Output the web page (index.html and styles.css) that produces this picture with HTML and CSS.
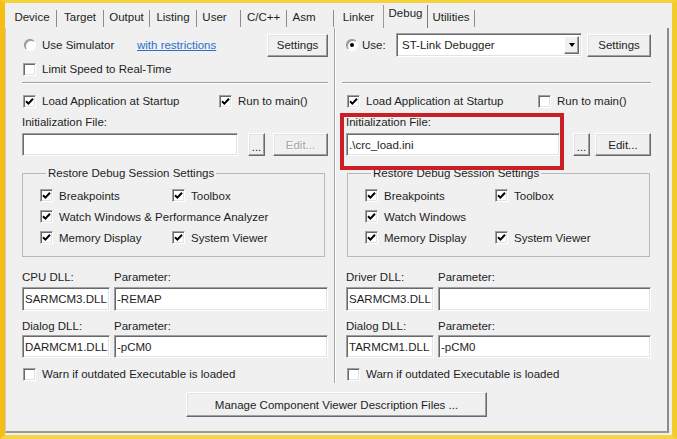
FILE: index.html
```html
<!DOCTYPE html>
<html>
<head>
<meta charset="utf-8">
<title>Options - Debug</title>
<link rel="stylesheet" href="styles.css">
</head>
<body>
<div class="frame">
  <div class="tabs">
    <span class="tab tab-device">Device</span>
    <span class="tab tab-target">Target</span>
    <span class="tab tab-output">Output</span>
    <span class="tab tab-listing">Listing</span>
    <span class="tab tab-user">User</span>
    <span class="tab tab-cpp">C/C++</span>
    <span class="tab tab-asm">Asm</span>
    <span class="tab tab-linker">Linker</span>
    <span class="tab tab-debug active">Debug</span>
    <span class="tab tab-util">Utilities</span>
  </div>
  <div class="pane">
    <div class="columns">
      <div class="col col-left">
        <div class="row r-top">
          <span class="radio radio-left"></span>
          <span class="lbl lbl-sim">Use Simulator</span>
          <span class="link">with restrictions</span>
          <span class="btn btn-settings">Settings</span>
        </div>
        <div class="row r-limit">
          <span class="check"><span class="cb"></span><span>Limit Speed to Real-Time</span></span>
        </div>
        <div class="sep"></div>
        <div class="row r-load">
          <span class="check check-load-left"><span class="cb"><svg viewBox="0 0 9 9"><path d="M1 4.2 L3.4 6.6 L8 1.8" fill="none" stroke="#000" stroke-width="2"/></svg></span><span>Load Application at Startup</span></span>
          <span class="check"><span class="cb"><svg viewBox="0 0 9 9"><path d="M1 4.2 L3.4 6.6 L8 1.8" fill="none" stroke="#000" stroke-width="2"/></svg></span><span>Run to main()</span></span>
        </div>
        <div class="row r-label">Initialization File:</div>
        <div class="row r-file">
          <span class="field field-file-left"></span>
          <span class="btn btn-dots btn-dots-left">...</span>
          <span class="btn btn-edit disabled">Edit...</span>
        </div>
        <fieldset class="group">
          <legend>Restore Debug Session Settings</legend>
          <div class="group-grid">
            <span class="check"><span class="cb"><svg viewBox="0 0 9 9"><path d="M1 4.2 L3.4 6.6 L8 1.8" fill="none" stroke="#000" stroke-width="2"/></svg></span><span>Breakpoints</span></span>
            <span class="check"><span class="cb"><svg viewBox="0 0 9 9"><path d="M1 4.2 L3.4 6.6 L8 1.8" fill="none" stroke="#000" stroke-width="2"/></svg></span><span>Toolbox</span></span>
            <span class="check span2"><span class="cb"><svg viewBox="0 0 9 9"><path d="M1 4.2 L3.4 6.6 L8 1.8" fill="none" stroke="#000" stroke-width="2"/></svg></span><span>Watch Windows &amp; Performance Analyzer</span></span>
            <span class="check"><span class="cb"><svg viewBox="0 0 9 9"><path d="M1 4.2 L3.4 6.6 L8 1.8" fill="none" stroke="#000" stroke-width="2"/></svg></span><span>Memory Display</span></span>
            <span class="check"><span class="cb"><svg viewBox="0 0 9 9"><path d="M1 4.2 L3.4 6.6 L8 1.8" fill="none" stroke="#000" stroke-width="2"/></svg></span><span>System Viewer</span></span>
          </div>
        </fieldset>
        <div class="dll dll-labels"><span>CPU DLL:</span><span>Parameter:</span></div>
        <div class="dll dll-fields"><span class="field">SARMCM3.DLL</span><span class="field">-REMAP</span></div>
        <div class="dll dll-labels dll-labels2"><span>Dialog DLL:</span><span>Parameter:</span></div>
        <div class="dll dll-fields dll-fields2"><span class="field">DARMCM1.DLL</span><span class="field">-pCM0</span></div>
        <div class="row r-warn">
          <span class="check"><span class="cb"></span><span>Warn if outdated Executable is loaded</span></span>
        </div>
      </div>
      <div class="col col-right">
        <div class="row r-top">
          <span class="radio on"></span>
          <span class="lbl lbl-use">Use:</span>
          <span class="field select"><span>ST-Link Debugger</span><span class="drop"></span></span>
          <span class="btn btn-settings btn-settings-right">Settings</span>
        </div>
        <div class="row r-limit"></div>
        <div class="sep sep-right"></div>
        <div class="row r-load">
          <span class="check check-load-right"><span class="cb"><svg viewBox="0 0 9 9"><path d="M1 4.2 L3.4 6.6 L8 1.8" fill="none" stroke="#000" stroke-width="2"/></svg></span><span>Load Application at Startup</span></span>
          <span class="check"><span class="cb"></span><span>Run to main()</span></span>
        </div>
        <div class="row r-label">Initialization File:</div>
        <div class="row r-file">
          <span class="field field-file-right">.\crc_load.ini</span>
          <span class="btn btn-dots btn-dots-right">...</span>
          <span class="btn btn-edit btn-edit-right">Edit...</span>
        </div>
        <fieldset class="group group-right">
          <legend>Restore Debug Session Settings</legend>
          <div class="group-grid group-grid-right">
            <span class="check"><span class="cb"><svg viewBox="0 0 9 9"><path d="M1 4.2 L3.4 6.6 L8 1.8" fill="none" stroke="#000" stroke-width="2"/></svg></span><span>Breakpoints</span></span>
            <span class="check"><span class="cb"><svg viewBox="0 0 9 9"><path d="M1 4.2 L3.4 6.6 L8 1.8" fill="none" stroke="#000" stroke-width="2"/></svg></span><span>Toolbox</span></span>
            <span class="check span2"><span class="cb"><svg viewBox="0 0 9 9"><path d="M1 4.2 L3.4 6.6 L8 1.8" fill="none" stroke="#000" stroke-width="2"/></svg></span><span>Watch Windows</span></span>
            <span class="check"><span class="cb"><svg viewBox="0 0 9 9"><path d="M1 4.2 L3.4 6.6 L8 1.8" fill="none" stroke="#000" stroke-width="2"/></svg></span><span>Memory Display</span></span>
            <span class="check"><span class="cb"><svg viewBox="0 0 9 9"><path d="M1 4.2 L3.4 6.6 L8 1.8" fill="none" stroke="#000" stroke-width="2"/></svg></span><span>System Viewer</span></span>
          </div>
        </fieldset>
        <div class="dll dll-labels"><span>Driver DLL:</span><span>Parameter:</span></div>
        <div class="dll dll-fields"><span class="field">SARMCM3.DLL</span><span class="field"></span></div>
        <div class="dll dll-labels dll-labels2"><span>Dialog DLL:</span><span>Parameter:</span></div>
        <div class="dll dll-fields dll-fields2"><span class="field">TARMCM1.DLL</span><span class="field">-pCM0</span></div>
        <div class="row r-warn">
          <span class="check"><span class="cb"></span><span>Warn if outdated Executable is loaded</span></span>
        </div>
      </div>
    </div>
    <div class="bottom">
      <span class="btn btn-manage">Manage Component Viewer Description Files ...</span>
    </div>
  </div>
  <div class="highlight"></div>
</div>
</body>
</html>
```
FILE: styles.css
```css
* { box-sizing: border-box; }
html, body { margin: 0; padding: 0; }
body {
  width: 677px;
  height: 439px;
  overflow: hidden;
  background: #f0f0f0;
  font-family: "Liberation Sans", Arial, sans-serif;
  font-size: 11.5px;
  color: #1e1e1e;
}

.frame {
  position: relative;
  width: 677px;
  height: 439px;
  background: #f0f0f0;
  border-style: solid;
  border-width: 3px 5px 4px 5px;
  border-color: #f4d23c #f1cd2c #f3d545 #f6bd14;
  display: flex;
  flex-direction: column;
}

/* tabs */
.tabs {
  flex: none;
  display: flex;
  align-items: flex-end;
  height: 20px;
  margin-top: 5px;
  padding-left: 3px;
}
.tab {
  flex: none;
  height: 17px;
  margin-bottom: 1px;
  padding-bottom: 3px;
  display: flex;
  align-items: center;
  justify-content: center;
  border-right: 1px solid #8c8c8c;
  white-space: nowrap;
}
.tab-device { width: 49px; }
.tab-target { width: 47px; }
.tab-output { width: 46px; }
.tab-listing { width: 47px; }
.tab-user { width: 44px; padding-right: 8px; }
.tab-cpp { width: 46px; }
.tab-asm { width: 47px; padding-right: 12px; }
.tab-linker { width: 49px; border-right: none; }
.tab-debug { width: 45px; }
.tab-util { width: 47px; }
.tab.active {
  height: 23px;
  margin-bottom: 0;
  padding-bottom: 7px;
  border-left: 1px solid #9a9a9a;
  border-right: 1px solid #7a7a7a;
}

/* pane */
.pane {
  flex: none;
  height: 405px;
  margin-right: 3px;
  border-left: 1px solid #cdcdcd;
  border-right: 2px solid #8c8c8c;
  border-bottom: 2px solid #9e9a88;
  display: flex;
  flex-direction: column;
}
.columns {
  flex: none;
  display: flex;
  height: 355px;
}
.col {
  flex: none;
  display: flex;
  flex-direction: column;
}
.col-left {
  width: 329px;
  padding: 0 6px 0 16px;
  border-right: 1px solid #a5a5a5;
  box-shadow: 1px 0 0 #ffffff;
}
.col-right {
  width: 332px;
  padding: 0 16px 0 11px;
}

.row {
  flex: none;
  display: flex;
  align-items: center;
  white-space: nowrap;
}
.r-top { margin-top: 5px; height: 24px; }
.r-limit { margin-top: 5px; height: 14px; }
.sep {
  flex: none;
  margin-top: 6px;
  height: 2px;
  border-top: 1px solid #a0a0a0;
  border-bottom: 1px solid #ffffff;
}
.sep-right { margin-left: -4px; }
.r-load { margin-top: 10px; height: 14px; }
.r-label { margin-top: 7px; height: 14px; }
.r-file { margin-top: 4px; height: 23px; }
.r-warn { margin-top: 9px; height: 14px; }

/* text bits */
.lbl-sim { margin-left: 6px; width: 95px; }
.lbl-use { margin-left: 4px; width: 34px; }
.radio-left { margin-left: 2px; }
.link {
  color: #2b6fcb;
  text-decoration: underline;
}

/* checkbox */
.check {
  display: flex;
  align-items: center;
  gap: 6px;
  padding-left: 1px;
  white-space: nowrap;
}
.check-load-left { width: 196px; }
.check-load-right { width: 191px; }
.cb {
  flex: none;
  width: 13px;
  height: 13px;
  background: #ffffff;
  border: 1px solid;
  border-color: #a0a0a0 #ffffff #ffffff #a0a0a0;
  box-shadow: inset 1px 1px 0 #696969, inset -1px -1px 0 #e3e3e3;
  display: flex;
  align-items: center;
  justify-content: center;
}
.cb svg { width: 9px; height: 9px; display: block; }

/* radio */
.radio {
  flex: none;
  width: 12px;
  height: 12px;
  border-radius: 50%;
  background: #ffffff;
  border: 1px solid;
  border-color: #8a8a8a #ffffff #ffffff #8a8a8a;
  box-shadow: inset 1px 1px 0 #9a9a9a;
  display: flex;
  align-items: center;
  justify-content: center;
}
.radio.on::after {
  content: "";
  width: 4px;
  height: 4px;
  border-radius: 50%;
  background: #000000;
}

/* buttons */
.btn {
  flex: none;
  display: flex;
  align-items: center;
  justify-content: center;
  background: #f0f0f0;
  border: 1px solid;
  border-color: #ffffff #696969 #696969 #ffffff;
  box-shadow: inset -1px -1px 0 #a0a0a0, inset 1px 1px 0 #e3e3e3;
  white-space: nowrap;
}
.btn-settings { width: 61px; height: 23px; margin-left: auto; }
.btn-settings-right { width: 64px; }
.btn-dots { width: 17px; height: 23px; padding-top: 4px; }
.btn-dots-left { margin-left: 10px; }
.btn-dots-right { margin-left: 13px; }
.btn-edit { width: 55px; height: 23px; margin-left: auto; }
.btn-edit-right { width: 56px; }
.btn.disabled {
  color: #a3a3a3;
  text-shadow: 1px 1px 0 #ffffff;
}
.btn-manage { width: 301px; height: 25px; }

/* fields */
.field {
  flex: none;
  height: 23px;
  background: #ffffff;
  border: 1px solid;
  border-color: #a0a0a0 #ffffff #ffffff #a0a0a0;
  box-shadow: inset 1px 1px 0 #696969, inset -1px -1px 0 #e3e3e3;
  display: flex;
  align-items: center;
  padding-left: 2px;
  white-space: nowrap;
  overflow: hidden;
}
.field-file-left { width: 216px; }
.field-file-right { width: 214px; }
.select {
  width: 186px;
  height: 24px;
  padding: 0 2px 0 5px;
  justify-content: space-between;
}
.drop {
  flex: none;
  width: 15px;
  height: 18px;
  background: #f0f0f0;
  border: 1px solid;
  border-color: #ffffff #696969 #696969 #ffffff;
  box-shadow: inset -1px -1px 0 #a0a0a0;
  display: flex;
  align-items: center;
  justify-content: center;
}
.drop::after {
  content: "";
  width: 0;
  height: 0;
  border-left: 3.5px solid transparent;
  border-right: 3.5px solid transparent;
  border-top: 4px solid #000000;
}

/* group box */
.group {
  flex: none;
  margin: 10px 0 0 0;
  width: 303px;
  min-width: 0;
  padding: 5px 4px 8px 16px;
  border: 1px solid #b9b9b9;
}
.group-right { margin-left: 1px; }
.group legend {
  padding: 0 2px;
  margin-left: 7px;
  height: 14px;
  line-height: 14px;
}
.group-grid {
  display: grid;
  grid-template-columns: 132px auto;
  grid-auto-rows: 21px;
  align-items: center;
}
.group-grid-right { grid-template-columns: 130px auto; }
.span2 { grid-column: 1 / -1; }

/* dll grid */
.dll {
  flex: none;
  display: grid;
  grid-template-columns: 88px 1fr;
  column-gap: 4px;
  white-space: nowrap;
}
.dll-labels { margin-top: 13px; height: 14px; align-items: center; }
.dll-fields { margin-top: 3px; height: 24px; }
.dll-fields .field { height: 24px; }
.dll-labels2 { margin-top: 8px; }
.dll-fields2 { margin-top: 2px; height: 23px; }
.dll-fields2 .field { height: 23px; }

/* bottom */
.bottom {
  flex: 1;
  display: flex;
  justify-content: center;
  padding-top: 9px;
}

/* red highlight annotation */
.highlight {
  position: absolute;
  left: 335px;
  top: 110px;
  width: 224px;
  height: 57px;
  border: 4px solid #cc1e25;
}
```
